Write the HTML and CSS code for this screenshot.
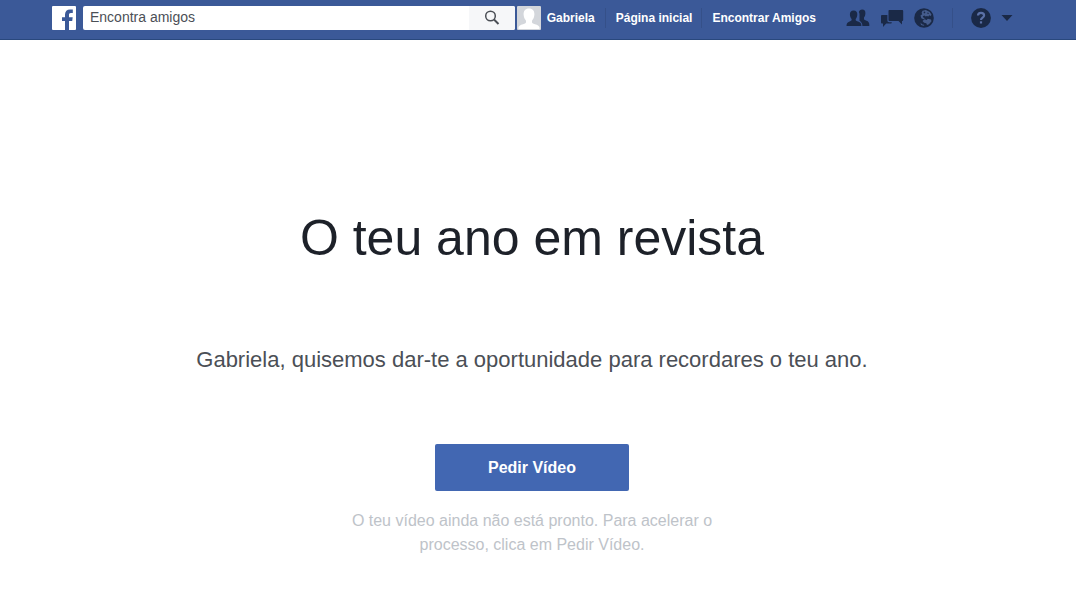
FILE: index.html
```html
<!DOCTYPE html>
<html lang="pt">
<head>
<meta charset="utf-8">
<meta name="viewport" content="width=device-width, initial-scale=1">
<title>O teu ano em revista</title>
<link rel="stylesheet" href="styles.css">
</head>
<body>
<header class="topbar">
  <a class="logo" href="#" aria-label="Facebook">
    <svg width="24" height="24" viewBox="0 0 24 24"><rect width="24" height="24" rx="1" fill="#fff"/><path d="M13 24v-9h-3v-3.700h3V8.600C13 5.200 15 3.400 18 3.400c1.300 0 2.300.1 2.800.2v3.300h-1.900c-1.500 0-1.900.8-1.900 1.900v2.500h3.700l-.5 3.700H17v9z" fill="#3b5998"/></svg>
  </a>
  <form class="search">
    <input class="search-input" type="text" aria-label="Encontra amigos" placeholder="Encontra amigos">
    <button class="search-button" type="button" aria-label="Pesquisar">
      <svg width="16" height="16" viewBox="0 0 16 16" fill="none" stroke="#4b4f56"><circle cx="6.500" cy="6" r="4.800" stroke-width="1.500"/><path d="M10 9.500l4.500 4.500" stroke-width="2"/></svg>
    </button>
  </form>
  <nav class="links">
    <a class="link profile" href="#">
      <svg width="24" height="24" viewBox="0 0 24 24"><rect width="24" height="24" rx="1" fill="#d3d6db"/><path d="M12 2.500c3.700 0 5.600 2.600 5.400 6-.1 2.600-1.100 4.600-2.200 5.800-.5 1.700-.3 2.700.8 3.300 2.600 1 5.400 1.400 6.500 3.400V23h-21v-2c1.100-2 3.900-2.400 6.500-3.400 1.100-.6 1.300-1.600.8-3.300-1.100-1.200-2.100-3.200-2.200-5.800-.2-3.400 1.700-6 5.400-6z" fill="#fff"/></svg>
      <span>Gabriela</span>
    </a>
    <a class="link" href="#">Página inicial</a>
    <a class="link" href="#">Encontrar Amigos</a>
  </nav>
  <div class="tools">
    <button class="tool" type="button" aria-label="Pedidos de amizade">
      <svg width="24" height="20" viewBox="0 0 24 20" fill="#1a2947"><path d="M16.200 1.500c2.300 0 3.400 1.600 3.200 3.900-.1 1.800-.7 3.200-1.400 4v1.400c0 1 1 1.400 2.500 2 1.900.8 2.800 1.600 2.800 3.800V18h-6.900c0-2.400-.9-4-2.900-5.200V6c0-.8-.3-1.500-.6-2 .4-1.500 1.500-2.500 3.300-2.500z"/><path d="M7.600 2.500c2.700 0 3.900 1.800 3.700 4.200-.1 1.900-.8 3.300-1.600 4.200v1c0 .7.900 1 2.400 1.600 2.400.8 3.300 1.700 3.300 4.500H.5c0-2.800 1-3.700 3.100-4.500 1.500-.6 2-1 2-1.700v-.9C4.800 10 4 8.600 3.900 6.700 3.700 4.300 5 2.500 7.600 2.500z"/></svg>
    </button>
    <button class="tool" type="button" aria-label="Mensagens">
      <svg width="24" height="20" viewBox="0 0 24 20" fill="#1a2947"><path d="M9.500 2H22c.8 0 1.200.4 1.200 1.200v8.600c0 .8-.4 1.200-1.200 1.200v3.500L18.500 13h-8.800c-.8 0-1.200-.4-1.200-1.200V3c0-.6.400-1 1-1z"/><path d="M2.200 7h5.200v5.500c0 1 .7 1.700 1.700 1.700h2.700c0 .8-.4 1.300-1.200 1.300H6.200L3 19v-3.500h-.8c-.8 0-1.200-.4-1.200-1.200V8.200C1 7.400 1.400 7 2.200 7z"/></svg>
    </button>
    <button class="tool" type="button" aria-label="Notificações">
      <svg width="20" height="20" viewBox="0 0 20 20"><circle cx="10" cy="10" r="9.800" fill="#1a2947"/><path d="M8.500 2.800l3.300-.7 4 2 1.700 2.700-.9 1.200-1.400-.7-.8 1.200-1.500-.6-1.200.7-1.200-1-1.800.6.800 1.500 1.500.3-1.500 1.200-2.200-1-.8-2.600 1.700-1.300-.6-1.500zM8.500 13l2-1.800 2.200.7 1-1.100 3.300.7.500 1.700-2.500 3-2 .7-.7-1.600-2.200-.5zM6.500 14.500l1.500 1.700 2.500.8-1 .8-2.500-.8z" fill="#455c8c"/><path d="M9.500 4l1.400-.5.500 1.300-1.300.6zM13.500 4.500l1.300.4-.3 1.200-1.200-.3z" fill="#1a2947"/></svg>
    </button>
    <span class="divider"></span>
    <button class="tool" type="button" aria-label="Ajuda">
      <svg width="20" height="20" viewBox="0 0 20 20"><circle cx="10" cy="10" r="9.900" fill="#1a2947"/><path d="M7 7.600C7 5.800 8.200 4.800 10 4.800s3.100 1 3.100 2.600c0 2.200-3.100 2.200-3.100 4.600" fill="none" stroke="#5a70a6" stroke-width="2.200"/><rect x="8.900" y="13.300" width="2.200" height="2.200" fill="#5a70a6"/></svg>
    </button>
    <button class="tool" type="button" aria-label="Menu da conta">
      <svg width="12" height="20" viewBox="0 0 12 20"><path d="M.5 7h11L6 13z" fill="#1a2947"/></svg>
    </button>
  </div>
</header>
<main class="content">
  <h1 class="title">O teu ano em revista</h1>
  <p class="intro">Gabriela, quisemos dar-te a oportunidade para recordares o teu ano.</p>
  <button class="request" type="button">Pedir Vídeo</button>
  <p class="note">O teu vídeo ainda não está pronto. Para acelerar o processo, clica em Pedir Vídeo.</p>
</main>
</body>
</html>
```
FILE: styles.css
```css
* {
  box-sizing: border-box;
}

body {
  margin: 0;
  background: #fff;
  color: #1d2129;
  font-family: "Liberation Sans", Arial, sans-serif;
}

button {
  border: 0;
  padding: 0;
  font-family: inherit;
  cursor: pointer;
}

svg {
  display: block;
  flex: none;
}

.topbar {
  display: flex;
  align-items: center;
  height: 40px;
  padding: 0 63px 4px 52px;
  background: #3b5998;
  border-bottom: 1px solid #29487d;
}

.logo {
  margin-right: 7px;
}

.search {
  display: flex;
  flex: 1;
  height: 24px;
  border-radius: 2px;
  background: #fff;
  overflow: hidden;
}

.search-input {
  flex: 1;
  min-width: 0;
  border: 0;
  padding: 0 7px 2px;
  background: transparent;
  font-family: inherit;
  font-size: 14px;
  color: #4b4f56;
}

.search-input::placeholder {
  color: #4b4f56;
  opacity: 1;
}

.search-button {
  display: flex;
  align-items: center;
  justify-content: center;
  width: 46px;
  background: #f6f7f9;
}

.links {
  display: flex;
  align-items: center;
  margin-left: 2px;
}

.link {
  display: flex;
  align-items: center;
  gap: 6px;
  height: 20px;
  padding: 0 10px;
  color: #fff;
  font-size: 12px;
  font-weight: bold;
  text-decoration: none;
  white-space: nowrap;
}

.link + .link {
  padding-right: 9px;
  border-left: 1px solid #355089;
}

.profile {
  padding-left: 0;
}

.tools {
  display: flex;
  align-items: center;
  gap: 10px;
  margin-left: 21px;
}

.tool {
  background: transparent;
}

.divider {
  width: 1px;
  height: 20px;
  margin: 0 8px;
  background: #355089;
}

.content {
  display: flex;
  flex-direction: column;
  align-items: center;
  padding: 168px 12px 32px 0;
  text-align: center;
}

.title {
  margin: 0;
  font-size: 50px;
  font-weight: normal;
  line-height: 60px;
}

.intro {
  margin: 76px 0 0;
  color: #4b4f56;
  font-size: 22px;
  line-height: 32px;
}

.request {
  min-width: 194px;
  margin-top: 68px;
  padding: 12px 52px;
  border-radius: 2px;
  background: #4267b2;
  color: #fff;
  font-size: 16px;
  font-weight: bold;
  line-height: 23px;
}

.note {
  max-width: 380px;
  margin: 18px 0 0;
  color: #bec3c9;
  font-size: 16px;
  line-height: 24px;
}
```
